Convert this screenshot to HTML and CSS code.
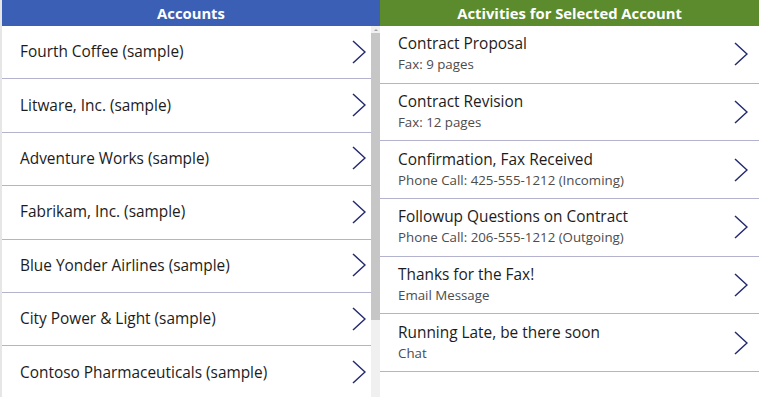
FILE: index.html
```html
<!doctype html>
<html>
    <head>
        <title>Accounts</title>
        <link rel="stylesheet" href="styles.css">
    </head>
    <body>
        <div class="win">
            <section class="pane accounts">
                <header class="head">Accounts</header>
                <div class="body">
                    <ul class="list">
                        <li class="row"><span class="title">Fourth Coffee (sample)</span><svg class="chev" viewBox="0 0 14 24"><path d="M1 1 L13 12 L1 23"/></svg></li>
                        <li class="row"><span class="title">Litware, Inc. (sample)</span><svg class="chev" viewBox="0 0 14 24"><path d="M1 1 L13 12 L1 23"/></svg></li>
                        <li class="row"><span class="title">Adventure Works (sample)</span><svg class="chev" viewBox="0 0 14 24"><path d="M1 1 L13 12 L1 23"/></svg></li>
                        <li class="row"><span class="title">Fabrikam, Inc. (sample)</span><svg class="chev" viewBox="0 0 14 24"><path d="M1 1 L13 12 L1 23"/></svg></li>
                        <li class="row"><span class="title">Blue Yonder Airlines (sample)</span><svg class="chev" viewBox="0 0 14 24"><path d="M1 1 L13 12 L1 23"/></svg></li>
                        <li class="row"><span class="title">City Power &amp; Light (sample)</span><svg class="chev" viewBox="0 0 14 24"><path d="M1 1 L13 12 L1 23"/></svg></li>
                        <li class="row"><span class="title">Contoso Pharmaceuticals (sample)</span><svg class="chev" viewBox="0 0 14 24"><path d="M1 1 L13 12 L1 23"/></svg></li>
                    </ul>
                    <div class="scroll">
                        <div class="arrow"></div>
                        <div class="thumb"></div>
                    </div>
                </div>
            </section>
            <section class="pane activities">
                <header class="head">Activities for Selected Account</header>
                <ul class="list">
                    <li class="row"><div class="text"><span class="title">Contract Proposal</span><span class="sub">Fax: 9 pages</span></div><svg class="chev" viewBox="0 0 14 24"><path d="M1 1 L13 12 L1 23"/></svg></li>
                    <li class="row"><div class="text"><span class="title">Contract Revision</span><span class="sub">Fax: 12 pages</span></div><svg class="chev" viewBox="0 0 14 24"><path d="M1 1 L13 12 L1 23"/></svg></li>
                    <li class="row"><div class="text"><span class="title">Confirmation, Fax Received</span><span class="sub">Phone Call: 425-555-1212 (Incoming)</span></div><svg class="chev" viewBox="0 0 14 24"><path d="M1 1 L13 12 L1 23"/></svg></li>
                    <li class="row"><div class="text"><span class="title">Followup Questions on Contract</span><span class="sub">Phone Call: 206-555-1212 (Outgoing)</span></div><svg class="chev" viewBox="0 0 14 24"><path d="M1 1 L13 12 L1 23"/></svg></li>
                    <li class="row"><div class="text"><span class="title">Thanks for the Fax!</span><span class="sub">Email Message</span></div><svg class="chev" viewBox="0 0 14 24"><path d="M1 1 L13 12 L1 23"/></svg></li>
                    <li class="row"><div class="text"><span class="title">Running Late, be there soon</span><span class="sub">Chat</span></div><svg class="chev" viewBox="0 0 14 24"><path d="M1 1 L13 12 L1 23"/></svg></li>
                </ul>
            </section>
        </div>
    </body>
</html>
```
FILE: styles.css
```css
* {
    box-sizing: border-box;
}
html,
body {
    margin: 0;
    padding: 0;
    height: 100%;
    background-color: #fff;
    color: #1c1c1c;
}
body {
    font-family: "Open Sans", sans-serif;
    overflow: hidden;
}
.win {
    height: 397px;
    display: grid;
    grid-template-columns: 380px 1fr;
}
.pane {
    display: flex;
    flex-direction: column;
    min-height: 0;
}
.accounts {
    border-left: 2px solid #e6e6e6;
}
.head {
    height: 26px;
    flex-shrink: 0;
    color: #fff;
    font-weight: 700;
    font-size: 14.8px;
    line-height: 26px;
    text-align: center;
}
.accounts .head {
    background-color: #3b5fb4;
}
.activities .head {
    background-color: #5b8b2c;
}
.body {
    flex: 1;
    display: flex;
    min-height: 0;
}
.list {
    list-style: none;
    margin: 0;
    padding: 0;
    flex: 1;
}
.row {
    display: flex;
    align-items: center;
    justify-content: space-between;
    border-bottom: 1px solid #b3b3cf;
}
.accounts .row {
    height: 53.4px;
    padding: 0 5px 1px 18px;
}
.activities .row {
    height: 57.7px;
    padding: 0 11px 0 18px;
}
.title {
    font-size: 15.4px;
}
.text {
    display: flex;
    flex-direction: column;
    gap: 0;
    line-height: 21px;
}
.sub {
    font-size: 13.3px;
    color: #4c4c4c;
}
.chev {
    width: 14px;
    height: 24px;
    flex-shrink: 0;
}
.chev path {
    fill: none;
    stroke: #232a6e;
    stroke-width: 1.5;
}
.scroll {
    width: 9px;
    flex-shrink: 0;
    background-color: #f0f0f0;
    display: flex;
    flex-direction: column;
    align-items: center;
}
.arrow {
    width: 0;
    height: 0;
    margin: 3px 0 2px;
    border-left: 2px solid transparent;
    border-right: 2px solid transparent;
    border-bottom: 2px solid #a0a0a0;
}
.thumb {
    width: 9px;
    height: 287px;
    background-color: #c6c6c6;
}
```
